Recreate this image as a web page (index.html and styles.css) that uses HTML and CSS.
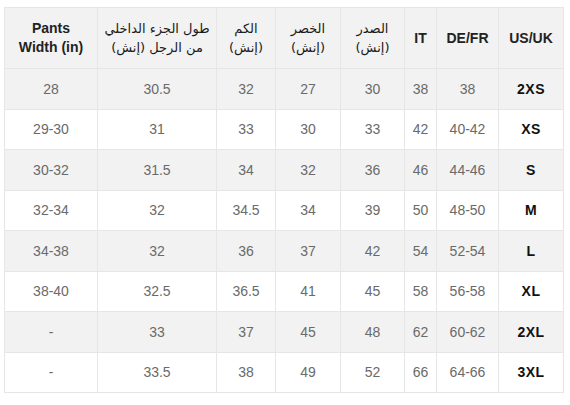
FILE: index.html
```html
<!DOCTYPE html>
<html lang="ar">
<head>
<meta charset="utf-8">
<link rel="stylesheet" href="styles.css">
</head>
<body>
<div class="wrap">
<table class="size-table" dir="ltr">
  <colgroup>
    <col class="c1"><col class="c2"><col class="c3"><col class="c4"><col class="c5"><col class="c6"><col class="c7"><col class="c8">
  </colgroup>
  <thead>
    <tr>
      <th>Pants<br>Width (in)</th>
      <th><span class="ar" dir="rtl">طول الجزء الداخلي<br>من الرجل (إنش)</span></th>
      <th><span class="ar" dir="rtl">الكم<br>(إنش)</span></th>
      <th><span class="ar" dir="rtl">الخصر<br>(إنش)</span></th>
      <th><span class="ar" dir="rtl">الصدر<br>(إنش)</span></th>
      <th>IT</th>
      <th>DE/FR</th>
      <th>US/UK</th>
    </tr>
  </thead>
  <tbody>
    <tr><td>28</td><td>30.5</td><td>32</td><td>27</td><td>30</td><td>38</td><td>38</td><td class="sz">2XS</td></tr>
    <tr><td>29-30</td><td>31</td><td>33</td><td>30</td><td>33</td><td>42</td><td>40-42</td><td class="sz">XS</td></tr>
    <tr><td>30-32</td><td>31.5</td><td>34</td><td>32</td><td>36</td><td>46</td><td>44-46</td><td class="sz">S</td></tr>
    <tr><td>32-34</td><td>32</td><td>34.5</td><td>34</td><td>39</td><td>50</td><td>48-50</td><td class="sz">M</td></tr>
    <tr><td>34-38</td><td>32</td><td>36</td><td>37</td><td>42</td><td>54</td><td>52-54</td><td class="sz">L</td></tr>
    <tr><td>38-40</td><td>32.5</td><td>36.5</td><td>41</td><td>45</td><td>58</td><td>56-58</td><td class="sz">XL</td></tr>
    <tr><td>-</td><td>33</td><td>37</td><td>45</td><td>48</td><td>62</td><td>60-62</td><td class="sz">2XL</td></tr>
    <tr><td>-</td><td>33.5</td><td>38</td><td>49</td><td>52</td><td>66</td><td>64-66</td><td class="sz">3XL</td></tr>
  </tbody>
</table>
</div>
</body>
</html>
```

FILE: styles.css
```css
html, body {
  margin: 0;
  padding: 0;
  background: #ffffff;
}
.wrap {
  padding: 7px 0 0 4px;
}
.size-table {
  border-collapse: collapse;
  table-layout: fixed;
  width: 559px;
  font-family: Arial, "Liberation Sans", "DejaVu Sans", sans-serif;
  font-size: 14px;
  color: #6a6a6a;
}
.c1 { width: 93px; }
.c2 { width: 119px; }
.c3 { width: 59px; }
.c4 { width: 65px; }
.c5 { width: 64px; }
.c6 { width: 32px; }
.c7 { width: 62px; }
.c8 { width: 65px; }
.size-table th,
.size-table td {
  border: 1px solid #e6e6e6;
  text-align: center;
  vertical-align: middle;
  padding: 0;
}
.size-table th {
  height: 60px;
  background: #f2f2f2;
  color: #222222;
  font-weight: bold;
  line-height: 19px;
}
.size-table th .ar {
  display: inline-block;
  font-family: "DejaVu Sans", sans-serif;
  font-weight: normal;
  font-size: 13px;
  line-height: 19px;
  white-space: nowrap;
  color: #1a1a1a;
}
.size-table td {
  height: 39.5px;
}
.size-table tbody tr:nth-child(odd) td {
  background: #f2f2f2;
}
.size-table td.sz {
  color: #111111;
  font-weight: bold;
  letter-spacing: 0.5px;
}
```
